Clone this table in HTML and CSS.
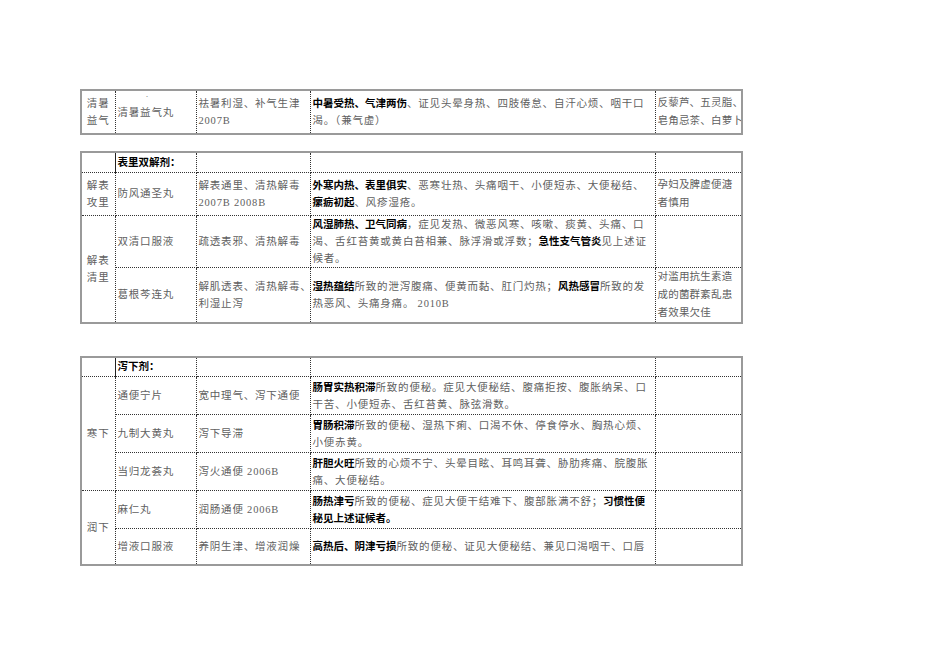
FILE: index.html
```html
<!DOCTYPE html>
<html lang="zh">
<head>
<meta charset="utf-8">
<title>中成药</title>
<link rel="stylesheet" href="styles.css">
</head>
<body>
<div class="page">
  <table class="t t1">
    <colgroup><col class="c1"><col class="c2"><col class="c3"><col class="c4"><col class="c5"></colgroup>
    <tr class="h45">
      <td class="k">清暑<br>益气</td>
      <td class="n rel"><span class="dot">·</span>清暑益气丸</td>
      <td class="n">祛暑利湿、补气生津<br>2007B</td>
      <td class="n"><span class="b">中暑受热、气津两伤</span>、证见头晕身热、四肢倦怠、自汗心烦、咽干口<br>渴。（兼气虚）</td>
      <td class="m">反藜芦、五灵脂、<br>皂角忌茶、白萝卜</td>
    </tr>
  </table>

  <table class="t t2">
    <colgroup><col class="c1"><col class="c2"><col class="c3"><col class="c4"><col class="c5"></colgroup>
    <tr class="hd">
      <td class="k hk"></td>
      <td class="n"><span class="b">表里双解剂：</span></td>
      <td></td><td></td><td></td>
    </tr>
    <tr class="r2a">
      <td class="k">解表<br>攻里</td>
      <td class="n">防风通圣丸</td>
      <td class="n">解表通里、清热解毒<br>2007B 2008B</td>
      <td class="n"><span class="b">外寒内热、表里俱实</span>、恶寒壮热、头痛咽干、小便短赤、大便秘结、<br><span class="b">瘰疬初起</span>、风疹湿疮。</td>
      <td class="m">孕妇及脾虚便溏<br>者慎用</td>
    </tr>
    <tr class="r2b">
      <td class="k" rowspan="2">解表<br>清里</td>
      <td class="n">双清口服液</td>
      <td class="n">疏透表邪、清热解毒</td>
      <td class="n"><span class="b">风湿肺热、卫气同病</span>，症见发热、微恶风寒、咳嗽、痰黄、头痛、口<br>渴、舌红苔黄或黄白苔相兼、脉浮滑或浮数；<span class="b">急性支气管炎</span>见上述证<br>候者。</td>
      <td class="m"></td>
    </tr>
    <tr class="r2c">
      <td class="n">葛根芩连丸</td>
      <td class="n">解肌透表、清热解毒、<br>利湿止泻</td>
      <td class="n"><span class="b">湿热蕴结</span>所致的泄泻腹痛、便黄而黏、肛门灼热；<span class="b">风热感冒</span>所致的发<br>热恶风、头痛身痛。 2010B</td>
      <td class="m">对滥用抗生素造<br>成的菌群紊乱患<br>者效果欠佳</td>
    </tr>
  </table>

  <table class="t t3">
    <colgroup><col class="c1"><col class="c2"><col class="c3"><col class="c4"><col class="c5"></colgroup>
    <tr class="hd">
      <td class="k hk"></td>
      <td class="n"><span class="b">泻下剂：</span></td>
      <td></td><td></td><td></td>
    </tr>
    <tr class="r3">
      <td class="k" rowspan="3">寒下</td>
      <td class="n">通便宁片</td>
      <td class="n">宽中理气、泻下通便</td>
      <td class="n"><span class="b">肠胃实热积滞</span>所致的便秘。症见大便秘结、腹痛拒按、腹胀纳呆、口<br>干苦、小便短赤、舌红苔黄、脉弦滑数。</td>
      <td class="m"></td>
    </tr>
    <tr class="r3">
      <td class="n">九制大黄丸</td>
      <td class="n">泻下导滞</td>
      <td class="n"><span class="b">胃肠积滞</span>所致的便秘、湿热下痢、口渴不休、停食停水、胸热心烦、<br>小便赤黄。</td>
      <td class="m"></td>
    </tr>
    <tr class="r3">
      <td class="n">当归龙荟丸</td>
      <td class="n">泻火通便 2006B</td>
      <td class="n"><span class="b">肝胆火旺</span>所致的心烦不宁、头晕目眩、耳鸣耳聋、胁肋疼痛、脘腹胀<br>痛、大便秘结。</td>
      <td class="m"></td>
    </tr>
    <tr class="r3">
      <td class="k" rowspan="2">润下</td>
      <td class="n">麻仁丸</td>
      <td class="n">润肠通便 2006B</td>
      <td class="n"><span class="b">肠热津亏</span>所致的便秘、症见大便干结难下、腹部胀满不舒；<span class="b">习惯性便<br>秘见上述证候者。</span></td>
      <td class="m"></td>
    </tr>
    <tr class="r3e">
      <td class="n">增液口服液</td>
      <td class="n">养阴生津、增液润燥</td>
      <td class="n"><span class="b">高热后、阴津亏损</span>所致的便秘、证见大便秘结、兼见口渴咽干、口唇</td>
      <td class="m"></td>
    </tr>
  </table>
</div>
</body>
</html>
```

FILE: styles.css
```css
html, body {
  margin: 0;
  padding: 0;
  background: #ffffff;
}

.page {
  padding: 89px 0 0 80px;
  font-family: "Liberation Serif", "Noto Sans CJK SC", serif;
  font-size: 10.5px;
  color: #606060;
}

.t {
  border-collapse: collapse;
  table-layout: fixed;
  width: 661px;
  border: 2px solid #9a9a9a;
}

.t1 { margin-bottom: 16px; }
.t2 { margin-bottom: 32px; }

.c1 { width: 34px; }
.c2 { width: 81px; }
.c3 { width: 114px; }
.c4 { width: 345px; }
.c5 { width: 87px; }

.t td {
  border: 1px dotted #333333;
  padding: 0 1px 0 2px;
  vertical-align: middle;
  white-space: nowrap;
  overflow: hidden;
  line-height: 17px;
}

.t td.k {
  text-align: center;
  letter-spacing: 1px;
  padding: 0;
}

.t td.hk {
  border-right: 1px solid #222222;
}

.n { letter-spacing: 0.8px; }

.t td.m {
  letter-spacing: 0.2px;
  line-height: 18px;
}

.b {
  font-weight: 700;
  color: #000000;
  letter-spacing: 0;
}

.rel { position: relative; }

.dot {
  position: absolute;
  left: 30px;
  top: 1px;
  font-size: 9px;
  line-height: 9px;
  color: #666666;
}

.h45 { height: 44px; }
.hd { height: 20px; }
.r2a { height: 43px; }
.r2b { height: 51px; }
.r2c { height: 54px; }
.r3 { height: 38px; }
.r3e { height: 36px; }
```
